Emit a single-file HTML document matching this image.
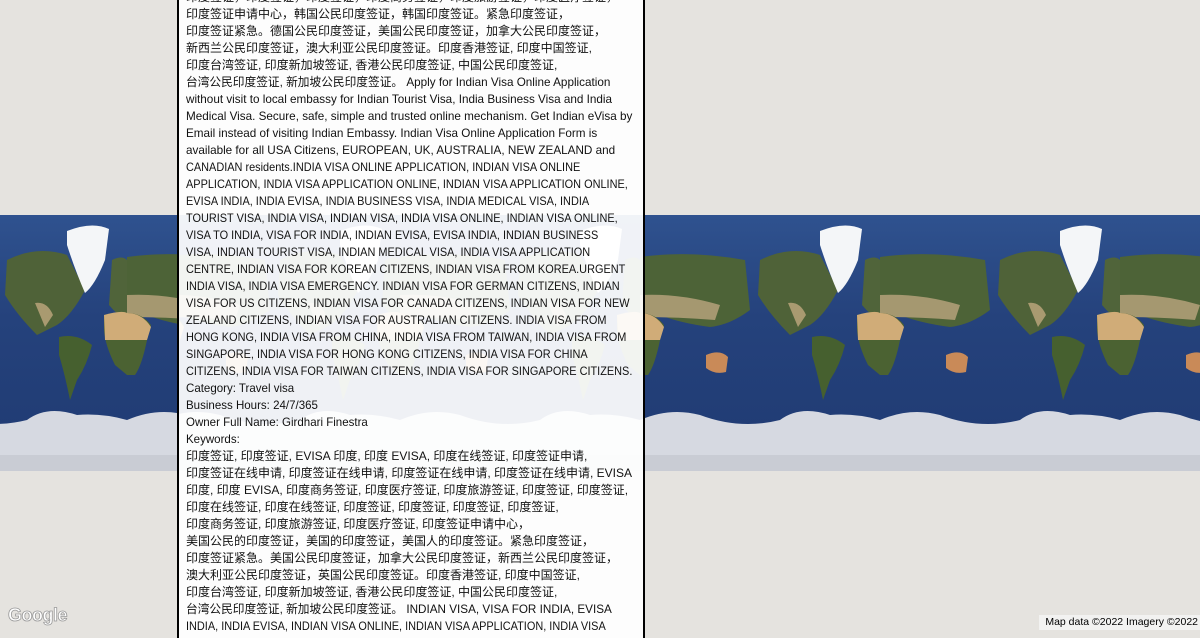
<!DOCTYPE html>
<html><head><meta charset="utf-8"><style>
html,body{margin:0;padding:0;width:1200px;height:630px;overflow:hidden;background:#e5e3df;}
#map{position:absolute;left:0;top:215px;width:1200px;height:256px;}
#panel{position:absolute;left:177px;top:-2px;width:464px;height:640px;border-left:2px solid #000;border-right:2px solid #000;background:rgba(255,255,255,0.93);overflow:hidden;}
#txt{position:absolute;left:7px;top:-9px;font-family:"Liberation Sans","Noto Sans CJK SC",sans-serif;font-size:12px;line-height:17px;color:#111;white-space:nowrap;}
#txt div{height:17px;transform-origin:0 0;}
#txt .u{transform:scaleX(0.91);}
#txt .m{transform:scaleX(0.975);}
#txt .s{transform:scaleX(0.96);}
#g{position:absolute;left:8px;top:605px;font-family:"Liberation Sans",sans-serif;font-size:18px;font-weight:bold;color:#fff;-webkit-text-stroke:0.8px #999;letter-spacing:-0.5px;}
#attr{position:absolute;right:0;top:615px;height:15px;padding:0 2px 0 6px;background:rgba(245,245,245,0.8);font-family:"Liberation Sans",sans-serif;font-size:10.5px;line-height:15px;color:#000;}
</style></head><body>
<svg width="0" height="0" style="position:absolute">
<defs>
<linearGradient id="oc" x1="0" y1="0" x2="0" y2="1"><stop offset="0" stop-color="#2f528f"/><stop offset="0.4" stop-color="#25427c"/><stop offset="1" stop-color="#1f3a72"/></linearGradient>
<g id="t">
<rect x="0" y="0" width="240" height="256" fill="url(#oc)"/>
<path d="M120 45 Q150 30 180 40 L198 75 Q185 100 170 110 L150 120 Q130 100 118 80 Z" fill="#4f6238"/>
<path d="M148 88 Q160 86 166 100 L158 112 Z" fill="#a99a70"/>
<path d="M180 16 Q205 6 222 14 L218 45 Q208 70 198 78 Q188 55 180 30 Z" fill="#f4f6f8"/>
<path d="M172 122 Q190 118 205 130 Q200 150 190 165 L183 185 Q178 160 172 140 Z" fill="#46602f"/>
<path d="M225 45 Q235 40 240 45 L240 105 Q230 100 222 90 Z" fill="#50643a"/>
<path d="M0 42 Q50 35 105 45 L110 95 Q90 110 70 112 Q40 108 20 100 L0 100 Z" fill="#4d6337"/>
<path d="M0 80 Q40 78 80 90 L75 105 Q40 102 0 102 Z" fill="#a59870"/>
<path d="M217 100 Q235 95 240 98 L240 160 L228 150 Q218 130 217 115 Z" fill="#4b6232"/>
<path d="M0 98 Q15 98 24 110 L20 125 Q15 150 8 160 L0 160 Z" fill="#4b6232"/>
<path d="M217 100 Q235 95 240 98 L240 125 L218 125 Z" fill="#d0ac78"/>
<path d="M0 98 Q15 98 24 112 L20 125 L0 125 Z" fill="#d0ac78"/>
<path d="M66 140 Q80 134 88 142 L86 157 Q75 160 66 153 Z" fill="#c98a58"/>
<path d="M0 205 Q30 192 60 200 Q100 215 140 205 Q160 190 190 200 Q215 198 240 205 L240 256 L0 256 Z" fill="#d6d9e1"/>
<rect x="0" y="240" width="240" height="16" fill="#c9ccd4"/>
</g>
</defs></svg>
<svg id="map" width="1200" height="256" viewBox="0 0 1200 256">
<g transform="translate(160,0)"><use href="#t"/><use href="#t" x="240"/><use href="#t" x="480"/><use href="#t" x="720"/><use href="#t" x="960"/></g>
</svg>
<svg style="position:absolute;left:0;top:215px" width="178" height="256"><g transform="translate(-113,0)"><use href="#t"/><use href="#t" x="240"/></g></svg>
<div id="panel"><div id="txt">
<div>印度签证，印度签证，印度签证，印度商务签证，印度旅游签证，印度医疗签证，</div>
<div>印度签证申请中心，韩国公民印度签证，韩国印度签证。紧急印度签证，</div>
<div>印度签证紧急。德国公民印度签证，美国公民印度签证，加拿大公民印度签证，</div>
<div>新西兰公民印度签证，澳大利亚公民印度签证。印度香港签证, 印度中国签证,</div>
<div>印度台湾签证, 印度新加坡签证, 香港公民印度签证, 中国公民印度签证,</div>
<div class="m">台湾公民印度签证, 新加坡公民印度签证。 Apply for Indian Visa Online Application</div>
<div class="m">without visit to local embassy for Indian Tourist Visa, India Business Visa and India</div>
<div class="m">Medical Visa. Secure, safe, simple and trusted online mechanism. Get Indian eVisa by</div>
<div class="m">Email instead of visiting Indian Embassy. Indian Visa Online Application Form is</div>
<div class="m">available for all USA Citizens, EUROPEAN, UK, AUSTRALIA, NEW ZEALAND and</div>
<div class="u">CANADIAN residents.INDIA VISA ONLINE APPLICATION, INDIAN VISA ONLINE</div>
<div class="u">APPLICATION, INDIA VISA APPLICATION ONLINE, INDIAN VISA APPLICATION ONLINE,</div>
<div class="u">EVISA INDIA, INDIA EVISA, INDIA BUSINESS VISA, INDIA MEDICAL VISA, INDIA</div>
<div class="u">TOURIST VISA, INDIA VISA, INDIAN VISA, INDIA VISA ONLINE, INDIAN VISA ONLINE,</div>
<div class="u">VISA TO INDIA, VISA FOR INDIA, INDIAN EVISA, EVISA INDIA, INDIAN BUSINESS</div>
<div class="u">VISA, INDIAN TOURIST VISA, INDIAN MEDICAL VISA, INDIA VISA APPLICATION</div>
<div class="u">CENTRE, INDIAN VISA FOR KOREAN CITIZENS, INDIAN VISA FROM KOREA.URGENT</div>
<div class="u">INDIA VISA, INDIA VISA EMERGENCY. INDIAN VISA FOR GERMAN CITIZENS, INDIAN</div>
<div class="u">VISA FOR US CITIZENS, INDIAN VISA FOR CANADA CITIZENS, INDIAN VISA FOR NEW</div>
<div class="u">ZEALAND CITIZENS, INDIAN VISA FOR AUSTRALIAN CITIZENS. INDIA VISA FROM</div>
<div class="u">HONG KONG, INDIA VISA FROM CHINA, INDIA VISA FROM TAIWAN, INDIA VISA FROM</div>
<div class="u">SINGAPORE, INDIA VISA FOR HONG KONG CITIZENS, INDIA VISA FOR CHINA</div>
<div class="u">CITIZENS, INDIA VISA FOR TAIWAN CITIZENS, INDIA VISA FOR SINGAPORE CITIZENS.</div>
<div class="s">Category: Travel visa</div>
<div class="s">Business Hours: 24/7/365</div>
<div class="s">Owner Full Name: Girdhari Finestra</div>
<div class="s">Keywords:</div>
<div>印度签证, 印度签证, EVISA 印度, 印度 EVISA, 印度在线签证, 印度签证申请,</div>
<div>印度签证在线申请, 印度签证在线申请, 印度签证在线申请, 印度签证在线申请, EVISA</div>
<div>印度, 印度 EVISA, 印度商务签证, 印度医疗签证, 印度旅游签证, 印度签证, 印度签证,</div>
<div>印度在线签证, 印度在线签证, 印度签证, 印度签证, 印度签证, 印度签证,</div>
<div>印度商务签证, 印度旅游签证, 印度医疗签证, 印度签证申请中心，</div>
<div>美国公民的印度签证，美国的印度签证，美国人的印度签证。紧急印度签证，</div>
<div>印度签证紧急。美国公民印度签证，加拿大公民印度签证，新西兰公民印度签证，</div>
<div>澳大利亚公民印度签证，英国公民印度签证。印度香港签证, 印度中国签证,</div>
<div>印度台湾签证, 印度新加坡签证, 香港公民印度签证, 中国公民印度签证,</div>
<div class="m">台湾公民印度签证, 新加坡公民印度签证。 INDIAN VISA, VISA FOR INDIA, EVISA</div>
<div class="u">INDIA, INDIA EVISA, INDIAN VISA ONLINE, INDIAN VISA APPLICATION, INDIA VISA</div>
</div></div>
<div id="g">Google</div>
<div id="attr">Map data ©2022 Imagery ©2022</div>
</body></html>
